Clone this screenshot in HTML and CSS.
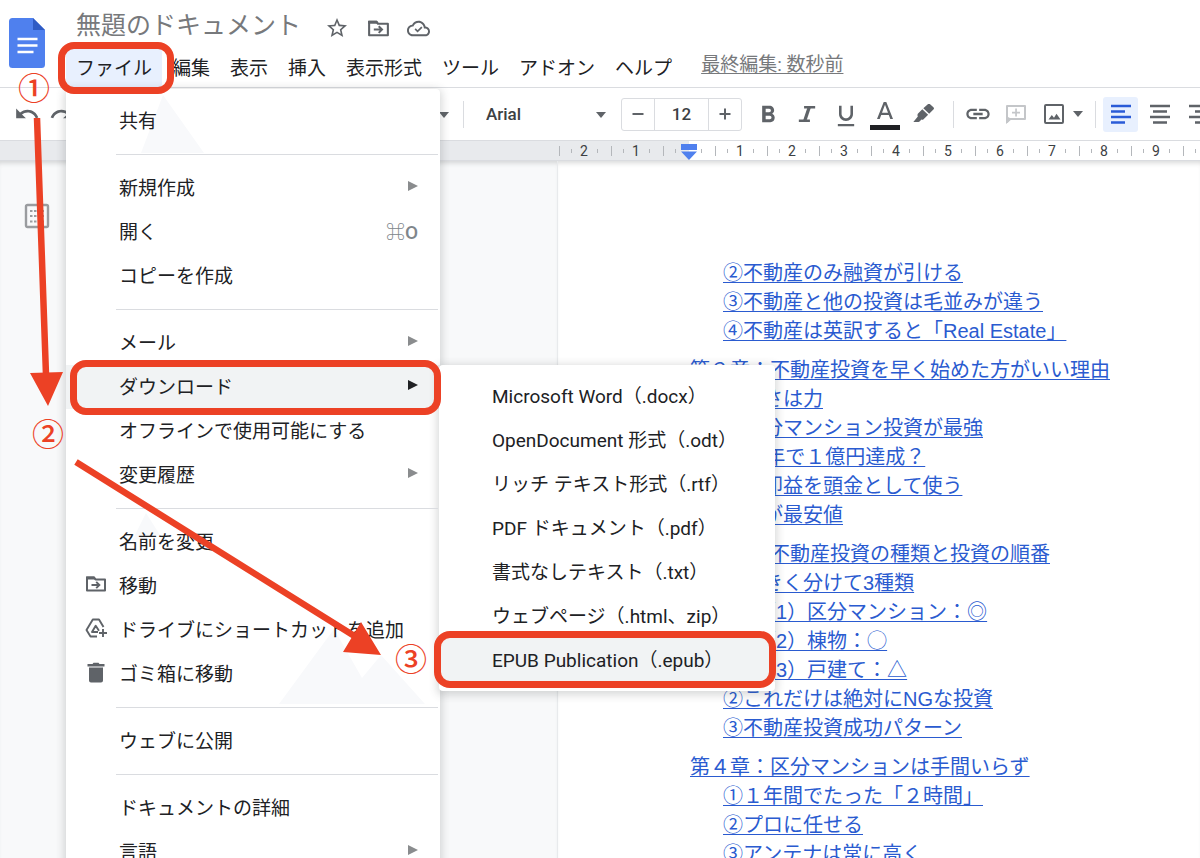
FILE: index.html
```html
<!DOCTYPE html>
<html lang="ja">
<head>
<meta charset="utf-8">
<title>無題のドキュメント</title>
<link rel="stylesheet" href="styles.css">
</head>
<body>
<svg class="defs" width="0" height="0" aria-hidden="true">
  <symbol id="folder-move" viewBox="0 0 24 24">
    <path d="M3 6v12.500h18V7.500H11.500L10 5.500H3z" fill="none" stroke="currentColor" stroke-width="2" stroke-linejoin="round"/>
    <path d="M2 4.500h8.500l2 3H2z" fill="currentColor"/>
    <path d="M7.500 13h7.500M12.200 9.800l3.200 3.200-3.200 3.200" fill="none" stroke="currentColor" stroke-width="1.900"/>
  </symbol>
</svg>

<header class="header">
  <svg class="logo" viewBox="0 0 36 50" role="img" aria-label="ドキュメント">
    <path d="M3.500 0H24l12 12v34.500a3.500 3.500 0 0 1-3.500 3.500h-29A3.500 3.500 0 0 1 0 46.500v-43A3.500 3.500 0 0 1 3.500 0z" fill="#4f80ee"/>
    <path d="M24 0l12 12H24z" fill="#2f5bc4"/>
    <path d="M8.500 21h20M8.500 27.500h20M8.500 34h16" stroke="#fff" stroke-width="2.600"/>
  </svg>
  <div class="header-main">
    <div class="title-row">
      <h1 class="doc-title">無題のドキュメント</h1>
      <button class="icon-button" aria-label="スターを付ける"><svg width="24" height="24" viewBox="0 0 24 24"><path fill="currentColor" d="M22 9.240l-7.190-.62L12 2 9.190 8.630 2 9.240l5.460 4.730L5.820 21 12 17.270 18.180 21l-1.630-7.030L22 9.240zM12 15.400l-3.760 2.270 1-4.280-3.320-2.880 4.380-.38L12 6.100l1.710 4.040 4.380.38-3.320 2.880 1 4.280L12 15.400z"/></svg></button>
      <button class="icon-button" aria-label="フォルダに移動"><svg width="25" height="25"><use href="#folder-move"/></svg></button>
      <button class="icon-button" aria-label="保存済み"><svg width="23" height="23" viewBox="0 0 24 24"><path fill="currentColor" d="M19.350 10.040C18.670 6.590 15.640 4 12 4 9.110 4 6.600 5.640 5.350 8.040 2.340 8.360 0 10.910 0 14c0 3.310 2.690 6 6 6h13c2.760 0 5-2.240 5-5 0-2.640-2.050-4.780-4.650-4.960zM19 18H6c-2.210 0-4-1.790-4-4 0-2.050 1.530-3.760 3.560-3.970l1.070-.11.5-.95C8.080 7.140 9.940 6 12 6c2.620 0 4.880 1.860 5.390 4.430l.3 1.500 1.530.11c1.560.1 2.780 1.410 2.780 2.960 0 1.650-1.350 3-3 3z"/><path d="M8.500 12.500l2.500 2.500 4.500-4.500" fill="none" stroke="currentColor" stroke-width="1.800"/></svg></button>
    </div>
    <nav class="menubar">
      <div class="menu-anchor">
        <button class="menubar-item active" aria-haspopup="true" aria-expanded="true">ファイル</button>
        <div class="menu" role="menu">
          <svg class="menu-art" width="373" height="620" viewBox="0 0 373 620" aria-hidden="true">
            <path d="M97 6L75 64H138zM66 452L80 424L94 446zM213 615L268 540L296 589L315 566L359 615z"/>
          </svg>
          <button class="item" role="menuitem"><span class="label">共有</span></button>
          <hr class="divider">
          <button class="item" role="menuitem"><span class="label">新規作成</span><span class="more"></span></button>
          <button class="item" role="menuitem"><span class="label">開く</span><kbd class="shortcut">⌘O</kbd></button>
          <button class="item" role="menuitem"><span class="label">コピーを作成</span></button>
          <hr class="divider">
          <button class="item" role="menuitem"><span class="label">メール</span><span class="more"></span></button>
          <div class="item-group">
            <button class="item selected" role="menuitem" aria-haspopup="true" aria-expanded="true"><span class="label">ダウンロード</span><span class="more"></span></button>
            <div class="submenu" role="menu">
              <button class="item" role="menuitem"><span class="label">Microsoft Word（.docx）</span></button>
              <button class="item" role="menuitem"><span class="label">OpenDocument 形式（.odt）</span></button>
              <button class="item" role="menuitem"><span class="label">リッチ テキスト形式（.rtf）</span></button>
              <button class="item" role="menuitem"><span class="label">PDF ドキュメント（.pdf）</span></button>
              <button class="item" role="menuitem"><span class="label">書式なしテキスト（.txt）</span></button>
              <button class="item" role="menuitem"><span class="label">ウェブページ（.html、zip）</span></button>
              <button class="item selected" role="menuitem"><span class="label">EPUB Publication（.epub）</span></button>
            </div>
          </div>
          <button class="item" role="menuitem"><span class="label">オフラインで使用可能にする</span></button>
          <button class="item" role="menuitem"><span class="label">変更履歴</span><span class="more"></span></button>
          <hr class="divider">
          <button class="item" role="menuitem"><span class="label">名前を変更</span></button>
          <button class="item" role="menuitem"><svg class="item-icon" width="24" height="24"><use href="#folder-move"/></svg><span class="label">移動</span></button>
          <button class="item" role="menuitem"><svg class="item-icon" width="24" height="24" viewBox="0 0 24 24"><path d="M13 20.500H6.500L2.500 14 8.800 3.500h6.200l4.500 7.500" fill="none" stroke="currentColor" stroke-width="1.900" stroke-linejoin="round"/><path d="M14 16H8l3.700-6.300 3.300 5" fill="none" stroke="currentColor" stroke-width="1.900" stroke-linejoin="round"/><path d="M19 13v8M15 17h8" stroke="currentColor" stroke-width="1.900"/></svg><span class="label">ドライブにショートカットを追加</span></button>
          <button class="item" role="menuitem"><svg class="item-icon" width="24" height="24" viewBox="0 0 24 24"><path fill="currentColor" d="M5 7.500h14v13a2 2 0 0 1-2 2H7a2 2 0 0 1-2-2zM3.500 4h5L9.500 2.700h5l1 1.300h5v2.500h-17z"/></svg><span class="label">ゴミ箱に移動</span></button>
          <hr class="divider">
          <button class="item" role="menuitem"><span class="label">ウェブに公開</span></button>
          <hr class="divider">
          <button class="item" role="menuitem"><span class="label">ドキュメントの詳細</span></button>
          <button class="item" role="menuitem"><span class="label">言語</span><span class="more"></span></button>
        </div>
      </div>
      <button class="menubar-item">編集</button>
      <button class="menubar-item">表示</button>
      <button class="menubar-item">挿入</button>
      <button class="menubar-item">表示形式</button>
      <button class="menubar-item">ツール</button>
      <button class="menubar-item">アドオン</button>
      <button class="menubar-item">ヘルプ</button>
      <a class="last-edit" href="#history">最終編集: 数秒前</a>
    </nav>
  </div>
</header>

<div class="toolbar" role="toolbar" aria-label="書式">
  <button class="history" aria-label="元に戻す"><svg width="26" height="26" viewBox="0 0 24 24"><path fill="currentColor" d="M12.500 8c-2.650 0-5.050.99-6.900 2.600L2 7v9h9l-3.620-3.620c1.390-1.160 3.160-1.880 5.120-1.880 3.540 0 6.550 2.310 7.600 5.500l2.370-.78C21.080 11.030 17.150 8 12.500 8z"/></svg></button>
  <button class="history" aria-label="やり直し"><svg width="26" height="26" viewBox="0 0 24 24"><path fill="currentColor" d="M18.400 10.600C16.550 8.990 14.150 8 11.500 8c-4.650 0-8.580 3.030-9.960 7.220L3.900 16c1.050-3.190 4.050-5.500 7.600-5.500 1.950 0 3.730.72 5.120 1.880L13 16h9V7l-3.600 3.600z"/></svg></button>
  <span class="select style-select"><select aria-label="スタイル"><option></option></select></span>
  <span class="rule"></span>
  <span class="select font-select"><select aria-label="フォント"><option>Arial</option></select></span>
  <div class="size-box">
    <button aria-label="フォントサイズを縮小"><svg width="14" height="14" viewBox="0 0 14 14"><path d="M1.500 7h11" stroke="currentColor" stroke-width="2"/></svg></button>
    <input type="text" value="12" aria-label="フォントサイズ">
    <button aria-label="フォントサイズを拡大"><svg width="14" height="14" viewBox="0 0 14 14"><path d="M1.500 7h11M7 1.500v11" stroke="currentColor" stroke-width="2"/></svg></button>
  </div>
  <div class="tools text-tools">
    <button aria-label="太字"><svg width="28" height="28" viewBox="0 0 24 24"><path fill="currentColor" d="M15.600 11.790c.97-.67 1.650-1.770 1.650-2.790 0-2.260-1.750-4-4-4H7v14h7.040c2.090 0 3.710-1.700 3.710-3.790 0-1.520-.86-2.820-2.150-3.420zM10 7.500h3c.83 0 1.500.67 1.500 1.500s-.67 1.500-1.500 1.500h-3v-3zm3.500 9H10v-3h3.500c.83 0 1.500.67 1.500 1.500s-.67 1.500-1.500 1.500z"/></svg></button>
    <button aria-label="斜体"><svg width="28" height="28" viewBox="0 0 24 24"><path d="M9.500 6.200h9.500M5 17.800h9.500" stroke="currentColor" stroke-width="2.200"/><path d="M14 6L10 18" stroke="currentColor" stroke-width="2.800"/></svg></button>
    <button aria-label="下線"><svg width="28" height="28" viewBox="0 0 24 24"><path fill="currentColor" d="M12 18c3.310 0 6-2.690 6-6V5h-2.200v7c0 1.930-1.870 3.700-3.800 3.700S8.200 13.930 8.200 12V5H6v7c0 3.310 2.690 6 6 6zm-7 2.500v2h14v-2H5z"/></svg></button>
    <button aria-label="テキストの色"><svg width="30" height="32" viewBox="0 0 30 32"><path fill="currentColor" d="M13.700 4L7 21h2.700l1.500-4h7.600l1.500 4H23L16.300 4zM12 14.800L15 6.800l3 8z"/><path d="M0 27h30v5H0z" fill="#202124"/></svg></button>
    <button aria-label="ハイライトの色"><svg width="22" height="20" viewBox="350 68 64 58"><path fill="currentColor" d="M395 67q2-1 4 1l11 10q2 3 0 5l-13 13-17-16zM377 83l17 16-14 14q-3 2-6 0-4 8-9 7h-14l13-16q-2-4 0-8z"/></svg></button>
  </div>
  <span class="rule"></span>
  <div class="tools insert-tools">
    <button aria-label="リンクを挿入"><svg width="30" height="28" viewBox="0 0 24 24"><path fill="currentColor" d="M3.900 12c0-1.400 1-2.600 2.600-2.600H11V7.500H6.500C4 7.500 2 9.500 2 12s2 4.500 4.500 4.500H11v-1.900H6.500c-1.600 0-2.600-1.200-2.600-2.600zM8 13h8v-2H8v2zm9.500-5.500H13v1.900h4.500c1.600 0 2.600 1.200 2.600 2.600s-1 2.600-2.600 2.600H13v1.900h4.500c2.500 0 4.500-2 4.500-4.500s-2-4.500-4.500-4.500z"/></svg></button>
    <button class="disabled" aria-label="コメントを追加"><svg width="22" height="22" viewBox="0 0 22 22"><path d="M2 19V3h18v13H4.500z" fill="none" stroke="currentColor" stroke-width="2" stroke-linejoin="round"/><path d="M1 13v8l6-5zM10.200 5.500h1.700v3.200H15v1.700h-3.100v3.100h-1.700v-3.100H7V8.700h3.200z" fill="currentColor"/></svg></button>
    <button aria-label="画像を挿入"><svg width="22" height="22" viewBox="0 0 22 22"><rect x="2" y="2" width="18" height="18" rx="1" fill="none" stroke="currentColor" stroke-width="2"/><path d="M5.500 16.500l3.300-4.500 2.200 2.800 2.500-4 4 5.700z" fill="currentColor"/></svg></button>
    <span class="caret"></span>
  </div>
  <span class="rule"></span>
  <div class="tools align-tools">
    <button class="pressed" aria-label="左揃え"><svg width="20" height="20" viewBox="0 0 20 20"><path d="M0 2h20M0 7.500h14M0 13h20M0 18.500h14" stroke="currentColor" stroke-width="2.400"/></svg></button>
    <button aria-label="中央揃え"><svg width="20" height="20" viewBox="0 0 20 20"><path d="M0 2h20M3 7.500h14M0 13h20M3 18.500h14" stroke="currentColor" stroke-width="2.400"/></svg></button>
    <button aria-label="右揃え"><svg width="20" height="20" viewBox="0 0 20 20"><path d="M0 2h20M6 7.500h14M0 13h20M6 18.500h14" stroke="currentColor" stroke-width="2.400"/></svg></button>
  </div>
</div>

<div class="ruler">
  <span class="cell">2</span><span class="cell">1</span><span class="cell zero"><svg width="18" height="16" viewBox="0 0 18 16"><path d="M1 0h16v6H1zM1 7.500h16L9 16z" fill="#4f80ee"/></svg></span><span class="cell">1</span><span class="cell">2</span><span class="cell">3</span><span class="cell">4</span><span class="cell">5</span><span class="cell">6</span><span class="cell">7</span><span class="cell">8</span><span class="cell">9</span><span class="cell">10</span>
</div>

<main class="workspace">
  <aside class="side">
    <button class="outline-button" aria-label="概要を表示"><svg width="26" height="26" viewBox="0 0 26 26"><rect x="2" y="2" width="22" height="22" rx="1.500" fill="none" stroke="currentColor" stroke-width="2.400"/><path d="M6 8h2.500M6 13h2.500M6 18.500h2.500M10 8h2.500M10 13h2.500M10 18.500h2.500M14 8h6M14 13h6M14 18.500h6" stroke="currentColor" stroke-width="2.200"/></svg></button>
  </aside>
  <article class="page">
    <ul class="toc">
      <li><a href="#s">②不動産のみ融資が引ける</a></li>
      <li><a href="#s">③不動産と他の投資は毛並みが違う</a></li>
      <li><a href="#s">④不動産は英訳すると「Real Estate」</a></li>
      <li class="chapter"><a href="#s">第２章：不動産投資を早く始めた方がいい理由</a></li>
      <li><a href="#s">①若さは力</a></li>
      <li><a href="#s">②区分マンション投資が最強</a></li>
      <li><a href="#s">③10年で１億円達成？</a></li>
      <li><a href="#s">④売却益を頭金として使う</a></li>
      <li><a href="#s">⑤今が最安値</a></li>
      <li class="chapter"><a href="#s">第３章：不動産投資の種類と投資の順番</a></li>
      <li><a href="#s">①大きく分けて3種類</a></li>
      <li class="deep"><a href="#s">（1）区分マンション：◎</a></li>
      <li class="deep"><a href="#s">（2）棟物：◯</a></li>
      <li class="deep"><a href="#s">（3）戸建て：△</a></li>
      <li><a href="#s">②これだけは絶対にNGな投資</a></li>
      <li><a href="#s">③不動産投資成功パターン</a></li>
      <li class="chapter"><a href="#s">第４章：区分マンションは手間いらず</a></li>
      <li><a href="#s">①１年間でたった「２時間」</a></li>
      <li><a href="#s">②プロに任せる</a></li>
      <li><a href="#s">③アンテナは常に高く</a></li>
    </ul>
  </article>
</main>

<div class="notes">
  <svg class="arrows" width="440" height="700" viewBox="0 0 440 700" aria-hidden="true">
    <path d="M37 118L46 375M76 462L356 637" fill="none" stroke="#ec4125" stroke-width="6.500"/>
    <path d="M30 373L63 372L48 406zM361 622L343 652L381 655z" fill="#ec4125"/>
  </svg>
  <span class="frame frame-file"></span>
  <span class="frame frame-download"></span>
  <span class="frame frame-epub"></span>
  <span class="step step-1">①</span>
  <span class="step step-2">②</span>
  <span class="step step-3">③</span>
</div>
</body>
</html>
```

FILE: styles.css
```css
* { box-sizing: border-box; }

body {
  margin: 0;
  height: 100vh;
  overflow: hidden;
  position: relative;
  display: flex;
  flex-direction: column;
  background: #fff;
  color: #202124;
  font-family: Roboto, "Noto Sans CJK JP", sans-serif;
  font-size: 19px;
}

button, input, select {
  font: inherit;
  color: inherit;
  background: none;
  border: 0;
  border-radius: 0;
  padding: 0;
  margin: 0;
}

svg { display: block; flex: none; }
.defs { position: absolute; }

/* Header */
.header {
  display: flex;
  gap: 21px;
  height: 88px;
  flex: none;
  padding-left: 9px;
  border-bottom: 1px solid #dadce0;
}
.logo { width: 36px; height: 50px; margin-top: 18px; }
.header-main { flex: 1; }
.title-row {
  display: flex;
  align-items: center;
  height: 48px;
  padding: 8px 0 0 10px;
  color: #5f6368;
}
.doc-title {
  margin: 0 24px 4px 0;
  font-size: 25px;
  line-height: 36px;
  font-weight: 400;
  color: #77797c;
}
.icon-button { width: 41px; display: flex; }

.menubar { display: flex; align-items: center; height: 39px; }
.menu-anchor { position: relative; height: 39px; z-index: 10; }
.menubar-item { height: 39px; padding: 0 10px 2px; white-space: nowrap; }
.menubar-item.active { background: #e8f0fe; }
.last-edit {
  margin: 0 0 10px 19px;
  color: #77797c;
  text-decoration-thickness: 1px;
  text-underline-offset: 2px;
  text-decoration-skip-ink: none;
  white-space: nowrap;
}

/* Menus */
.menu, .submenu {
  position: absolute;
  background: #fff;
  border-radius: 4px;
  box-shadow: 0 2px 8px 2px rgba(60, 64, 67, 0.2);
}
.menu { top: 41px; left: 0; width: 374px; padding: 10px 0; }
.submenu { top: 0; left: 373px; width: 336px; padding: 9px 0; }
.menu-art { position: absolute; top: 0; left: 0; fill: #f8f9fb; }

.item {
  position: relative;
  display: grid;
  grid-template-columns: 53px 1fr auto;
  align-items: center;
  width: 100%;
  height: 44px;
  padding: 0 22px 4px 0;
  text-align: left;
  white-space: nowrap;
}
.label { grid-column: 2; }
.item-icon { grid-column: 1; grid-row: 1; margin-left: 18px; color: #5f6368; }
.item-group { position: relative; }
.item.selected { background: #f1f3f4; }
.more {
  border: 5px solid transparent;
  border-left: 10px solid #8a8c8e;
  border-right: 0;
}
.selected .more { border-left-color: #202124; }
.shortcut { font: inherit; font-weight: 500; color: #80868b; }
.divider {
  position: relative;
  height: 1px;
  margin: 11px 2px 11px 50px;
  border: 0;
  background: #dadce0;
}

/* Toolbar */
.toolbar {
  display: flex;
  align-items: center;
  flex: none;
  height: 53px;
  padding-left: 14px;
  border-bottom: 1px solid #dadce0;
  color: #5f6368;
  font-size: 17px;
  font-weight: 500;
}
.toolbar button { display: flex; align-items: center; justify-content: center; flex: none; }
.history { width: 26px; margin-right: 9px; }
.rule { width: 1px; height: 27px; flex: none; background: #dadce0; }
.select { position: relative; flex: none; }
.select::after, .caret {
  content: "";
  border: 5px solid transparent;
  border-top: 6px solid #5f6368;
  border-bottom: 0;
}
.select::after { position: absolute; right: 5px; top: 14px; }
.select select { appearance: none; width: 100%; height: 32px; padding: 0 12px; color: #3c4043; }
.style-select { width: 370px; margin-right: 9px; }
.font-select { width: 137px; margin: 0 10px; }
.size-box {
  display: grid;
  grid-template-columns: 32px 55px 32px;
  height: 33px;
  flex: none;
  border: 1px solid #dadce0;
  border-radius: 3px;
}
.size-box input {
  width: 55px;
  text-align: center;
  color: #3c4043;
  border: 1px solid #dadce0;
  border-width: 0 1px;
}
.tools { display: flex; align-items: center; flex: none; }
.text-tools { padding: 0 10px 0 6px; }
.text-tools button { width: 39px; }
.insert-tools { padding: 0 12px 0 5px; }
.insert-tools button { width: 38px; }
.disabled { color: #c4c6c9; }
.align-tools { gap: 4px; padding-left: 7px; }
.align-tools button { width: 35px; height: 35px; border-radius: 3px; }
.align-tools .pressed { background: #e8f0fe; color: #2a5bd7; }

/* Ruler */
.ruler {
  display: flex;
  flex: none;
  height: 20px;
  padding-left: 558px;
  overflow: hidden;
  background: linear-gradient(to right, #e8eaed 689px, #fff 689px);
  border-bottom: 1px solid #dadce0;
  color: #3c4043;
  font-size: 14px;
  line-height: 20px;
}
.cell {
  flex: none;
  width: 52px;
  text-align: center;
  background:
    linear-gradient(#b4b7bb, #b4b7bb) 1px 5px / 1px 10px no-repeat,
    linear-gradient(#b4b7bb, #b4b7bb) 13px 8px / 1px 4px no-repeat,
    linear-gradient(#b4b7bb, #b4b7bb) 39px 8px / 1px 4px no-repeat;
}
.zero { display: flex; justify-content: center; padding: 3px 0 0 2px; }

/* Document */
.workspace { display: flex; flex: 1; min-height: 0; }
.side { width: 558px; flex: none; padding: 42px 0 0 24px; background: #f8f9fa; border-right: 1px solid #e8eaec; box-shadow: inset 0 5px 5px -3px rgba(60, 64, 67, 0.2); }
.outline-button { color: #9a9c9f; }
.page { flex: 1; overflow: hidden; padding: 98px 0 0 132px; box-shadow: inset 0 5px 5px -3px rgba(60, 64, 67, 0.2); }
.toc {
  list-style: none;
  margin: 0;
  padding: 0;
  font-family: "Liberation Sans", "Noto Sans CJK JP", sans-serif;
  font-size: 20px;
  line-height: 29px;
  white-space: nowrap;
}
.toc li { height: 29px; padding-left: 33px; }
.toc .chapter { margin-top: 10px; padding-left: 0; }
.toc .deep { padding-left: 66px; }
.toc a {
  color: #2a5bd0;
  text-decoration-thickness: 1px;
  text-underline-offset: 2px;
  text-decoration-skip-ink: none;
}

/* Step annotations laid over the screen */
.notes { position: absolute; inset: 0; z-index: 20; overflow: hidden; pointer-events: none; }
.arrows { position: absolute; top: 0; left: 0; }
.frame { position: absolute; border: 7px solid #ec4125; border-radius: 16px; }
.frame-file { left: 58px; top: 42px; width: 116px; height: 52px; }
.frame-download { left: 70px; top: 360px; width: 371px; height: 55px; }
.frame-epub { left: 434px; top: 631px; width: 342px; height: 57px; }
.step {
  position: absolute;
  width: 32px;
  color: #ec4125;
  font-family: "Noto Sans CJK JP", sans-serif;
  font-size: 32px;
  font-weight: 500;
  line-height: 32px;
  text-align: center;
}
.step-1 { left: 18px; top: 70px; }
.step-2 { left: 32px; top: 416px; }
.step-3 { left: 395px; top: 641px; }
```
